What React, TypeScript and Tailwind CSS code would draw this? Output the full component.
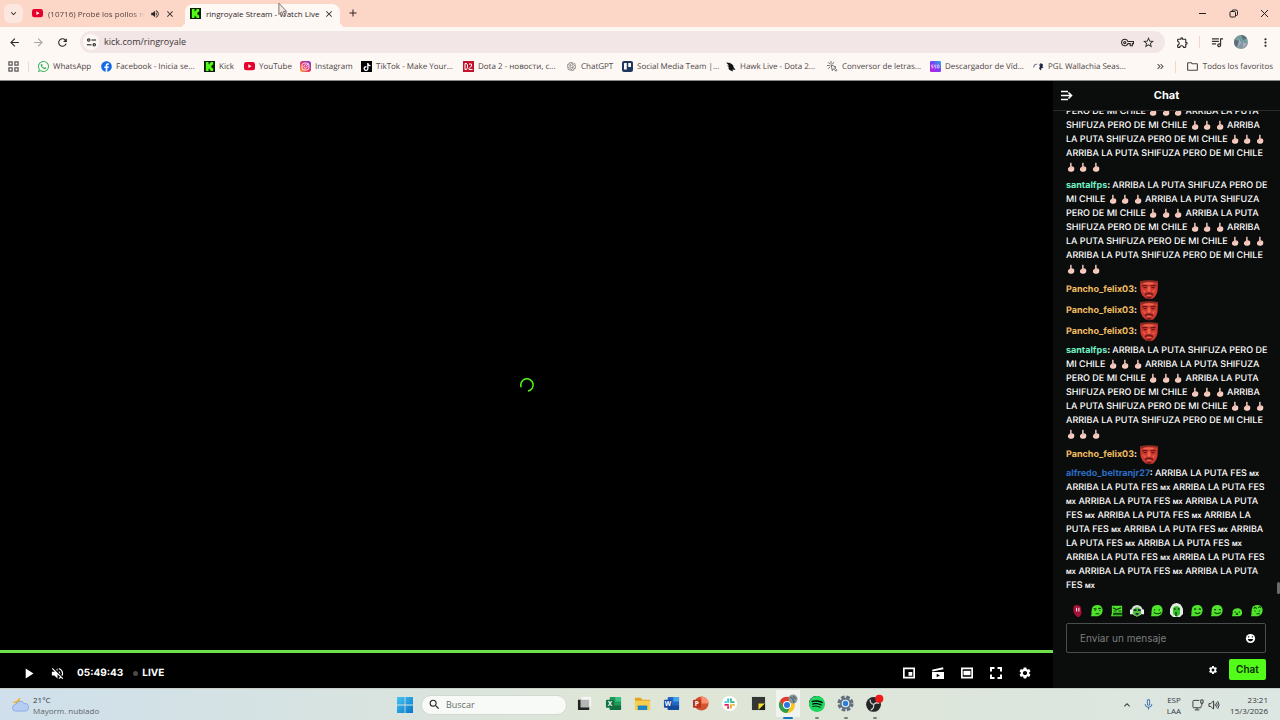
import type { ReactNode } from 'react';
import {
  MdArrowBack, MdArrowForward, MdRefresh, MdClose, MdAdd, MdKeyboardArrowDown, MdKeyboardArrowUp, MdVolumeUp,
  MdStarBorder, MdMoreVert, MdOutlineExtension, MdOutlineVpnKey, MdOutlineFolder, MdPlayArrow, MdVolumeOff,
  MdSettings, MdSearch, MdMicNone, MdKeyboardDoubleArrowRight,
} from 'react-icons/md';
import { SiWhatsapp, SiTiktok, SiOpenai, SiSpotify } from 'react-icons/si';
import { FaFacebook } from 'react-icons/fa';

/* ---------- small logos ---------- */

const KickLogo = () => (
  <svg viewBox="0 0 12 12" className="size-[11px] shrink-0">
    <rect width="12" height="12" fill="#0b1a06" />
    <path d="M2 1h3v2.500h1v-1h1V1h3v3H9v1H8v2h1v1h1v3H7V9.500H6v-1H5V11H2z" fill="#53fc18" />
  </svg>
);

const YouTubeLogo = () => (
  <svg viewBox="0 0 24 18" className="w-[11px] shrink-0">
    <rect y="0" width="24" height="18" rx="5" fill="#e8002d" />
    <path d="M9.500 5v8l7-4z" fill="#fff" />
  </svg>
);

const InstagramLogo = () => (
  <svg viewBox="0 0 24 24" className="size-[11px] shrink-0">
    <defs>
      <linearGradient id="ig" x1="0" y1="1" x2="1" y2="0">
        <stop offset="0" stopColor="#fdb52a" />
        <stop offset=".45" stopColor="#ee2a5f" />
        <stop offset="1" stopColor="#7a35dd" />
      </linearGradient>
    </defs>
    <rect width="24" height="24" rx="6" fill="url(#ig)" />
    <rect x="4.500" y="4.500" width="15" height="15" rx="4.500" fill="none" stroke="#fff" strokeWidth="2" />
    <circle cx="12" cy="12" r="3.600" fill="none" stroke="#fff" strokeWidth="2" />
    <circle cx="16.500" cy="7.500" r="1.200" fill="#fff" />
  </svg>
);

const TikTokLogo = () => (
  <span className="grid size-[11px] shrink-0 place-items-center bg-black">
    <SiTiktok className="size-[8px] text-white" />
  </span>
);

const DotaLogo = () => (
  <svg viewBox="0 0 22 22" className="size-[11px] shrink-0">
    <rect width="22" height="22" fill="#c3122b" />
    <path d="M4 5h3l2 3v5l-2 4H4zM12 6h5v4l-5 5v2h7" fill="none" stroke="#fff" strokeWidth="2" />
  </svg>
);

const TrelloLogo = () => (
  <svg viewBox="0 0 22 22" className="size-[11px] shrink-0">
    <rect width="22" height="22" rx="4" fill="#20375f" />
    <rect x="4" y="4" width="5.500" height="13" rx="1" fill="#fff" />
    <rect x="12.500" y="4" width="5.500" height="8" rx="1" fill="#fff" />
  </svg>
);

const HawkLogo = () => (
  <svg viewBox="0 0 22 22" className="size-[11px] shrink-0">
    <path d="M2 3l8 1 6 4 1 4 4 6-6-1 1 4-7-3-3-5 3 0-5-4 4 0z" fill="#111" />
  </svg>
);

const ClickLogo = () => (
  <svg viewBox="0 0 22 22" className="size-[11px] shrink-0" fill="none" stroke="#444" strokeWidth="1.500" strokeLinecap="round">
    <path d="M8 1v4M2.500 3l3 3M1 9h4M3 15l3-3M13 3l-2 3M9 8l9 4-3 1.500 5 5-2 2-5-5-2 3z" />
  </svg>
);

const DownloaderLogo = () => (
  <svg viewBox="0 0 22 22" className="size-[11px] shrink-0">
    <defs>
      <linearGradient id="ssd" x1="0" y1="1" x2="1" y2="0">
        <stop offset="0" stopColor="#c81bd8" />
        <stop offset=".5" stopColor="#7b3df5" />
        <stop offset="1" stopColor="#23b5e8" />
      </linearGradient>
    </defs>
    <rect width="22" height="22" rx="2" fill="url(#ssd)" />
    <path d="M7 8H3v3h3v3H3M13 8h-4v3h3v3h-3M15 8v6h3V8z" fill="none" stroke="#e8dcff" strokeWidth="1.400" />
  </svg>
);

const PglLogo = () => (
  <svg viewBox="0 0 22 22" className="size-[11px] shrink-0">
    <path d="M11 5l3 3 1-4 5 3-1 5 2 2h-4l-1 5-4-4 2-4z" fill="#1b2440" />
    <path d="M1 13l2-5 5-2" stroke="#7c859f" strokeWidth="2.500" fill="none" />
  </svg>
);

const bookmarks: { label: string; icon: ReactNode; width: string }[] = [
  { label: 'WhatsApp', icon: <SiWhatsapp className="size-[11px] shrink-0 text-[#37b35b]" />, width: 'w-[63px]' },
  { label: 'Facebook - Inicia se...', icon: <FaFacebook className="size-[11px] shrink-0 text-[#1269e8]" />, width: 'w-[103px]' },
  { label: 'Kick', icon: <KickLogo />, width: 'w-[40px]' },
  { label: 'YouTube', icon: <YouTubeLogo />, width: 'w-[56px]' },
  { label: 'Instagram', icon: <InstagramLogo />, width: 'w-[61px]' },
  { label: 'TikTok - Make Your...', icon: <TikTokLogo />, width: 'w-[102px]' },
  { label: 'Dota 2 - новости, с...', icon: <DotaLogo />, width: 'w-[103px]' },
  { label: 'ChatGPT', icon: <SiOpenai className="mx-px size-[9px] shrink-0 text-[#6b6b6b]" />, width: 'w-[56px]' },
  { label: 'Social Media Team |...', icon: <TrelloLogo />, width: 'w-[103px]' },
  { label: 'Hawk Live - Dota 2...', icon: <HawkLogo />, width: 'w-[102px]' },
  { label: 'Conversor de letras...', icon: <ClickLogo />, width: 'w-[103px]' },
  { label: 'Descargador de Víd...', icon: <DownloaderLogo />, width: 'w-[103px]' },
  { label: 'PGL Wallachia Seas...', icon: <PglLogo />, width: 'w-[102px]' },
];

/* ---------- browser chrome ---------- */

function TabStrip() {
  return (
    <div className="flex h-[27px] shrink-0 items-end bg-[#fcd6c7] pl-1">
      <button aria-label="Buscar pestañas" className="mb-1 grid size-[19px] place-items-center rounded-md bg-[#fde8e0]">
        <MdKeyboardArrowDown className="size-[11px]" />
      </button>
      <div className="ml-2 flex h-[27px] w-[154px] items-center gap-[5px] px-px">
        <YouTubeLogo />
        <button className="w-[97px] bg-linear-to-r from-[#4d3f3b] from-85% to-[#fcd6c7] bg-clip-text text-left text-[8px] whitespace-nowrap text-transparent">
          (10716) Probé los pollos m
        </button>
        <MdVolumeUp className="size-[10px] shrink-0" />
        <button aria-label="Cerrar pestaña" className="shrink-0"><MdClose className="size-[10px]" /></button>
      </div>
      <div className="relative flex h-[23px] w-[155px] items-center rounded-t-lg bg-[#fef8f5] pr-[6px] pb-1 pl-[5px] before:absolute before:bottom-0 before:-left-[6px] before:size-[6px] before:rounded-br-md before:shadow-[3px_3px_0_#fef8f5] before:content-[''] after:absolute after:-right-[6px] after:bottom-0 after:size-[6px] after:rounded-bl-md after:shadow-[-3px_3px_0_#fef8f5] after:content-['']">
        <KickLogo />
        <button className="ml-[5px] flex-1 text-left text-[8px] whitespace-nowrap">ringroyale Stream - Watch Live</button>
        <button aria-label="Cerrar pestaña"><MdClose className="size-[10px]" /></button>
        {/* mouse pointer */}
        <svg viewBox="0 0 10 17" className="absolute -top-[2px] left-[93px] h-[16px] w-[9px]">
          <path d="M1 1v12.500l3-3 2 5 2-1-2-4.500h3.500z" fill="#f6e9e4" stroke="#6f6662" strokeWidth="1" />
        </svg>
      </div>
      <button aria-label="Nueva pestaña" className="mb-2 ml-[7px]"><MdAdd className="size-[12px]" /></button>
      <div className="mb-2 ml-auto flex items-center gap-5 pr-[10px]">
        <button aria-label="Minimizar">
          <svg viewBox="0 0 11 11" className="size-[11px]" stroke="#222"><path d="M2 5.500h7" /></svg>
        </button>
        <button aria-label="Restaurar">
          <svg viewBox="0 0 11 11" className="size-[11px]" fill="none" stroke="#222">
            <rect x="2" y="3.500" width="5.500" height="5.500" rx="1" />
            <path d="M4 3.500V3a1 1 0 0 1 1-1h3a1.500 1.500 0 0 1 1.500 1.500v3a1 1 0 0 1-1 1h-1" />
          </svg>
        </button>
        <button aria-label="Cerrar">
          <svg viewBox="0 0 11 11" className="size-[11px]" stroke="#222"><path d="M2 2l7 7M9 2L2 9" /></svg>
        </button>
      </div>
    </div>
  );
}

function Toolbar() {
  return (
    <div className="flex h-[30px] shrink-0 items-center bg-[#fef8f5] px-2">
      <button aria-label="Atrás"><MdArrowBack className="size-[13px]" /></button>
      <button aria-label="Adelante" className="ml-[11px] text-[#aaa3a1]"><MdArrowForward className="size-[13px]" /></button>
      <button aria-label="Recargar" className="ml-[11px]"><MdRefresh className="size-[13px]" /></button>
      <div className="ml-[11px] flex h-[22px] flex-1 items-center rounded-full bg-[#f2e6e6] pr-[10px] pl-[3px]">
        <button aria-label="Información del sitio" className="grid size-4 place-items-center rounded-full bg-[#fef8f5]">
          <svg viewBox="0 0 12 12" className="size-[11px]" fill="none" stroke="#333" strokeWidth="1.300">
            <circle cx="3" cy="3.300" r="1.300" /><path d="M6 3.300h5" />
            <circle cx="9" cy="8.500" r="1.300" /><path d="M1 8.500h5" />
          </svg>
        </button>
        <input aria-label="Dirección" defaultValue="kick.com/ringroyale" className="ml-[5px] min-w-0 flex-1 bg-transparent text-[9px] text-[#3c3536] outline-none" />
        <button aria-label="Contraseñas"><MdOutlineVpnKey className="size-[13px]" /></button>
        <button aria-label="Añadir a favoritos" className="ml-2"><MdStarBorder className="size-[13px]" /></button>
      </div>
      <button aria-label="Extensiones" className="ml-[11px]"><MdOutlineExtension className="size-[13px]" /></button>
      <span className="ml-[10px] h-3 w-px bg-[#f8d3c6]" />
      <button aria-label="Multimedia" className="ml-[11px]">
        <svg viewBox="0 0 14 14" className="size-[13px]" fill="none" stroke="#333" strokeWidth="1.300">
          <path d="M1 3h7.500M1 5.700h7.500M1 8.400h4.500M10.300 10V3H13" />
          <circle cx="8.800" cy="10" r="1.500" />
        </svg>
      </button>
      <button aria-label="Perfil" className="ml-[10px]">
        <svg viewBox="0 0 14 14" className="size-[14px] rounded-full">
          <rect width="14" height="14" fill="#829a9f" />
          <path d="M0 4l5 2-3 8-3 0zM7 0l2 5 5-2-2-4z" fill="#557178" />
          <path d="M5 3l3 4-4 5 1-5zM9 7l4 2-4 4z" fill="#b5a6c3" />
          <path d="M4 1l3 2 2 6-3-3zM10 5l3 1-3 2z" fill="#5aa596" />
        </svg>
      </button>
      <button aria-label="Menú" className="ml-[11px]"><MdMoreVert className="size-[13px]" /></button>
    </div>
  );
}

function BookmarksBar() {
  return (
    <nav className="flex h-6 shrink-0 items-center border-b border-[#8e8a8a] bg-[#fef8f5] pb-1 pl-2 text-[8px] text-[#4b4444]">
      <button aria-label="Aplicaciones">
        <svg viewBox="0 0 12 12" className="size-[11px]" fill="none" stroke="#444" strokeWidth="1.200">
          <rect x="1" y="1" width="3.500" height="3.500" /><rect x="7.500" y="1" width="3.500" height="3.500" />
          <rect x="1" y="7.500" width="3.500" height="3.500" /><rect x="7.500" y="7.500" width="3.500" height="3.500" />
        </svg>
      </button>
      <span className="mr-[9px] ml-[9px] h-[10px] w-px bg-[#e6dad6]" />
      {bookmarks.map((b) => (
        <a key={b.label} href="#" className={`flex shrink-0 items-center gap-[4px] whitespace-nowrap ${b.width}`}>
          {b.icon}
          {b.label}
        </a>
      ))}
      <button aria-label="Más favoritos" className="mr-[9px] ml-auto"><MdKeyboardDoubleArrowRight className="size-[11px]" /></button>
      <span className="mr-[10px] h-3 w-px bg-[#f8d3c6]" />
      <a href="#" className="mr-[7px] flex items-center gap-[4px] whitespace-nowrap">
        <MdOutlineFolder className="size-[13px]" />
        Todos los favoritos
      </a>
    </nav>
  );
}

/* ---------- player ---------- */

function Player() {
  return (
    <main className="relative flex min-w-0 flex-1 flex-col justify-end bg-black text-white">
      <div className="absolute inset-0 grid place-items-center">
        <svg viewBox="0 0 16 16" className="size-[16px]">
          <path d="M2.200 10.300A6.200 6.200 0 1 1 9 14.100" fill="none" stroke="#53fc18" strokeWidth="1.500" />
        </svg>
      </div>
      <div className="h-[3px] bg-[#6fe04a]" />
      <div className="relative flex h-[35px] items-center pt-[5px] pr-[21px] pl-5">
        <button aria-label="Reproducir"><MdPlayArrow className="size-[17px]" /></button>
        <button aria-label="Activar sonido" className="ml-[13px]"><MdVolumeOff className="size-[15px]" /></button>
        <span className="ml-3 text-[10px] font-bold">05:49:43</span>
        <span className="ml-[10px] size-[5px] rounded-full bg-[#4a4a4a]" />
        <span className="ml-1 text-[10px] font-bold">LIVE</span>
        <div className="ml-auto flex items-center gap-[15px]">
          <button aria-label="Ventana flotante">
            <svg viewBox="0 0 14 14" className="size-[14px]" fill="#fff">
              <path d="M1 1.500h12v11H1zm1.700 1.700v7.600h8.600V3.200z" fillRule="evenodd" />
              <rect x="6.500" y="6" width="3.800" height="3.800" />
            </svg>
          </button>
          <button aria-label="Crear clip">
            <svg viewBox="0 0 14 14" className="size-[14px]" fill="#fff">
              <path d="M1 3.800l11-2.600.5 2L1.500 5.600z" />
              <path d="M1 6h12v7H1zm4.700 1.700v3.600l3.200-1.800z" fillRule="evenodd" />
            </svg>
          </button>
          <button aria-label="Modo cine">
            <svg viewBox="0 0 14 14" className="size-[14px]" fill="#fff">
              <path d="M1 1.500h12v11H1zm1.700 1.700v7.600h8.600V3.200z" fillRule="evenodd" />
              <rect x="3.500" y="4.800" width="7" height="4.400" />
            </svg>
          </button>
          <button aria-label="Pantalla completa">
            <svg viewBox="0 0 14 14" className="size-[14px]" fill="none" stroke="#fff" strokeWidth="2">
              <path d="M2 5.500V2h3.500M8.500 2H12v3.500M12 8.500V12H8.500M5.500 12H2V8.500" />
            </svg>
          </button>
          <button aria-label="Ajustes"><MdSettings className="size-[14px]" /></button>
        </div>
      </div>
    </main>
  );
}

/* ---------- chat ---------- */

const Finger = () => (
  <svg viewBox="0 0 12 12" className="inline-block size-[10px] align-[-2px]">
    <path d="M5 1.500c0-.8 1.700-.8 1.700 0v3.700l1.200.1c1.300.1 2 .7 2 1.900v1.500c0 1.900-1.200 3-3.200 3H5.400C3.500 11.700 2.300 10.400 2.300 8.800c0-1 .3-1.700 1-2.300L5 5.300z" fill="#f8cfc2" />
    <path d="M5 5.500v2M6.700 5.500v2M8.300 5.800v1.700M3.300 8.400h3" stroke="#d99f93" strokeWidth=".5" fill="none" />
  </svg>
);

const RedFace = () => (
  <svg viewBox="0 0 20 20" className="inline-block size-[20px]">
    <path d="M1 1q9-1 18 0l-.5 10q-1 5-4.500 7.500-3.500 1.500-7 0Q2.500 15.500 1.500 11z" fill="#cf3a30" />
    <path d="M1 1q9-1 18 0l-.3 2Q10 .8 1.200 4z" fill="#8a2a24" />
    <path d="M4 3q6-1.500 11 0l-1 1.500H5z" fill="#ef6449" />
    <path d="M3 6q3-1.200 5.500 0M11.500 6q3-1.200 5.500 0" stroke="#6d161a" strokeWidth="1.300" fill="none" />
    <path d="M4.500 7.600h3M12.500 7.600h3" stroke="#48090e" strokeWidth=".9" />
    <path d="M9 6.500l-1 4.500 2 1 2-1-1-4.500z" fill="#ee624a" />
    <path d="M3 9.500l4 1.500-1.500 2zM17 9.500l-4 1.500 1.500 2z" fill="#ea5a43" />
    <path d="M6 13.700q4-2.200 8 0l.3 2.300-1.500-1.300q-2.800-1-5.600 0L5.700 16z" fill="#6a1a1c" />
    <path d="M8 15.300h4" stroke="#f07a62" strokeWidth=".8" />
    <path d="M7 16.800h6l-1.500 2.200H8.500z" fill="#7a1f20" />
  </svg>
);

const shifuzaTail = [
  'PERO DE MI CHILE 🖕 🖕 🖕 ARRIBA LA PUTA',
  'SHIFUZA PERO DE MI CHILE 🖕 🖕 🖕 ARRIBA',
  'LA PUTA SHIFUZA PERO DE MI CHILE 🖕 🖕 🖕',
  'ARRIBA LA PUTA SHIFUZA PERO DE MI CHILE',
  '🖕 🖕 🖕',
];

const shifuza = [
  'ARRIBA LA PUTA SHIFUZA PERO DE',
  'MI CHILE 🖕 🖕 🖕 ARRIBA LA PUTA SHIFUZA',
  ...shifuzaTail,
];

const fes = [
  'ARRIBA LA PUTA FES 🇲🇽',
  'ARRIBA LA PUTA FES 🇲🇽 ARRIBA LA PUTA FES',
  '🇲🇽 ARRIBA LA PUTA FES 🇲🇽 ARRIBA LA PUTA',
  'FES 🇲🇽 ARRIBA LA PUTA FES 🇲🇽 ARRIBA LA',
  'PUTA FES 🇲🇽 ARRIBA LA PUTA FES 🇲🇽 ARRIBA',
  'LA PUTA FES 🇲🇽 ARRIBA LA PUTA FES 🇲🇽',
  'ARRIBA LA PUTA FES 🇲🇽 ARRIBA LA PUTA FES',
  '🇲🇽 ARRIBA LA PUTA FES 🇲🇽 ARRIBA LA PUTA',
  'FES 🇲🇽',
];

// swaps the emoji for what the chat shows: a drawn hand, and plain letters for the flag
function ChatText({ text }: { text: string }) {
  return text.split(/(🖕|🇲🇽)/u).map((part, i) => {
    if (part === '🖕') return <Finger key={i} />;
    if (part === '🇲🇽') return <span key={i} className="text-[6px] leading-none font-bold">MX</span>;
    return part;
  });
}

function Message({ name, color, lines }: { name?: string; color?: string; lines: string[] }) {
  return (
    <p className="shrink-0 py-[2px] whitespace-nowrap">
      {lines.map((line, i) => (
        <span key={i} className="block h-[14px]">
          {i === 0 && name && <b className="font-bold"><span className={color}>{name}</span>: </b>}
          <ChatText text={line} />
        </span>
      ))}
    </p>
  );
}

const PanchoMessage = () => (
  <p className="flex h-[21px] shrink-0 items-center font-bold">
    <span className="text-[#f2bd62]">Pancho_felix03</span>:
    <span className="ml-[2px] flex"><RedFace /></span>
  </p>
);

// blob-shaped emotes, only the face differs
function Blob({ face, shape = 'M2 5q1-4 6-4 5 0 5.500 5 .3 6-5 7H1q1-2 .5-4z' }: { face: string; shape?: string }) {
  return (
    <svg viewBox="0 0 15 15" className="size-[14px]">
      <path d={shape} fill="#4fe32c" />
      <path d={face} fill="none" stroke="#0d3a08" strokeWidth="1.200" />
    </svg>
  );
}

const emotes: ReactNode[] = [
  <svg viewBox="0 0 15 15" className="size-[14px]">
    <path d="M4 2q5-2 7.500 1l1 6q-1 5-4.500 5-4.500-3-4.500-8z" fill="#a30f35" />
    <path d="M7 4v4M9.500 4v4" stroke="#ffd5df" strokeWidth="1.200" />
  </svg>,
  <Blob face="M4 5l3 .5M9 5l3-.5M5 7h1M10 7h1M6 10.500h4" />,
  <Blob shape="M2 2h11v11H1l1-3z" face="M3 4l4 2 5-2M4 7.500h3M9 7.500h3M4 10h8v1.500H4z" />,
  <svg viewBox="0 0 15 15" className="size-[14px]">
    <circle cx="7.500" cy="7" r="6" fill="#d9ded9" />
    <path d="M3.500 6q4-5 8 0l1 4-5 4-5-4z" fill="#4fc23c" />
    <path d="M0 6h3v5H0zM12 6h3v5h-3z" fill="#eee" />
    <path d="M4 6.500h3M8.500 6.500h3M6 10.500h3" stroke="#1b2533" strokeWidth="1.800" />
  </svg>,
  <Blob face="M5 5.500v1.500M10 5.500v1.500M4 9q4 3 8 0" />,
  <svg viewBox="0 0 15 15" className="size-[15px]">
    <path d="M1 6q2-6 6.500-6T14 6v5l-3 3H4l-3-3z" fill="#e4ebe4" />
    <path d="M4 5q3.500-4 7 0v6l-3 3-4-3z" fill="#34c42b" />
    <path d="M5 6h1.500M9 6h1.500M7 9v4" stroke="#0d3a08" strokeWidth="1.300" />
  </svg>,
  <Blob face="M4.500 6q1-1.500 2 0M9.500 6q1-1.500 2 0M5 9q3 2.500 6 0" />,
  <Blob face="M4.500 6h2M9.500 6h2M4.500 9q3.500 2.500 7 0" />,
  <Blob shape="M3 7q2-3 6-2.500 4 1 4 4.500 0 4-4 4H2q1-2 1-6z" face="M5.500 8v1.500M10 8v1.500M6.500 11.500l1-1.500 1 1.500" />,
  <Blob face="M4 5q1.500-3 3 0M9 4q1.500-2 2.500 0M5.500 7v1M10 7v1M7 10.500h3.500" />,
];

function Chat() {
  return (
    <aside className="flex w-[227px] shrink-0 flex-col bg-[#0b0c0c] text-white">
      <header className="flex h-[30px] shrink-0 items-center border-b border-[#2a2c2c] px-[7px]">
        <button aria-label="Ocultar chat">
          <svg viewBox="0 0 13 13" className="size-[13px]" fill="none" stroke="#fff" strokeWidth="1.600">
            <path d="M1 2.500h7M1 6.500h10M1 10.500h7M8.500 3.500l3 3-3 3" />
          </svg>
        </button>
        <h2 className="flex-1 pr-[13px] text-center text-[11px] font-bold">Chat</h2>
      </header>
      <div className="flex min-h-0 flex-1 overflow-hidden">
        <div className="flex min-w-0 flex-1 flex-col justify-end overflow-hidden pb-[3px] pl-[13px] text-[9px] leading-[14px] font-medium">
          <Message lines={shifuzaTail} />
          <Message name="santalfps" color="text-[#72f0c4]" lines={shifuza} />
          <PanchoMessage />
          <PanchoMessage />
          <PanchoMessage />
          <Message name="santalfps" color="text-[#72f0c4]" lines={shifuza} />
          <PanchoMessage />
          <Message name="alfredo_beltranjr27" color="text-[#2b6cc4]" lines={fes} />
        </div>
        <span className="mb-1 h-3 w-[3px] self-end rounded-full bg-[#6b6d6d]" />
      </div>
      <div className="shrink-0 pr-[14px] pb-2 pl-[13px]">
        <div className="flex h-[25px] items-center justify-between pr-[2px] pl-1">
          {emotes.map((emote, i) => (
            <button key={i} aria-label={`Emote ${i + 1}`}>{emote}</button>
          ))}
        </div>
        <div className="flex h-[30px] items-center rounded-xs border border-[#4b4e4e] pr-[9px] pl-[13px]">
          <input aria-label="Enviar un mensaje" placeholder="Enviar un mensaje" className="min-w-0 flex-1 bg-transparent text-[10px] outline-none placeholder:text-[#7c7f7f]" />
          <button aria-label="Emojis">
            <svg viewBox="0 0 12 12" className="size-[11px]">
              <circle cx="6" cy="6" r="5" fill="#fff" />
              <path d="M4 3.500v1.500M8 3.500v1.500" stroke="#0b0c0c" strokeWidth="1.200" />
              <path d="M3 6.500h6q-.5 2.700-3 2.700T3 6.500z" fill="#0b0c0c" />
            </svg>
          </button>
        </div>
        <div className="mt-[6px] flex items-center justify-end gap-[11px]">
          <button aria-label="Ajustes del chat"><MdSettings className="size-[10px]" /></button>
          <button className="h-[21px] w-[37px] rounded-xs bg-[#53fc18] text-[10px] font-semibold text-[#0c2a05]">Chat</button>
        </div>
      </div>
    </aside>
  );
}

/* ---------- taskbar ---------- */

function OfficeIcon({ letter, dark, mid, light }: { letter: string; dark: string; mid: string; light: string }) {
  return (
    <svg viewBox="0 0 18 18" className="size-[17px]">
      <rect x="5" y="2" width="12" height="14" rx="1" fill={mid} />
      <path d="M11 2h5q1 0 1 1v4h-6z" fill={light} />
      <path d="M5 11h12v4q0 1-1 1H6q-1 0-1-1z" fill={dark} />
      <rect x="1" y="5" width="8.500" height="8.500" rx="1" fill={dark} />
      <text x="5.200" y="11.800" fontSize="7" fontWeight="700" textAnchor="middle" fill="#fff">{letter}</text>
    </svg>
  );
}

const taskApps: { name: string; open?: boolean; active?: boolean; icon: ReactNode }[] = [
  {
    name: 'Vista de tareas',
    icon: (
      <svg viewBox="0 0 16 16" className="size-[15px]">
        <rect x="5" y="1" width="10" height="10" fill="#f7f7f5" /><path d="M1 4h3v8h9v3H1z" fill="#222" /><rect x="4" y="4" width="9" height="8" fill="#b5b7b5" />
      </svg>
    ),
  },
  { name: 'Excel', icon: <OfficeIcon letter="X" dark="#107040" mid="#1f9a5b" light="#37c481" /> },
  {
    name: 'Explorador',
    icon: (
      <svg viewBox="0 0 18 18" className="size-[17px]">
        <path d="M1 3h6l2 2h8v11H1z" fill="#e2a320" /><path d="M1 6h16v10H1z" fill="#f9cd4e" /><path d="M4 12q0-1 1-1h8q1 0 1 1v4H4z" fill="#1b87c9" />
      </svg>
    ),
  },
  { name: 'Word', icon: <OfficeIcon letter="W" dark="#154a9e" mid="#2267c4" light="#41a5ee" /> },
  {
    name: 'PowerPoint',
    icon: (
      <svg viewBox="0 0 18 18" className="size-[17px]">
        <circle cx="10" cy="9" r="7.500" fill="#d35230" /><path d="M10 1.500A7.500 7.500 0 0 1 17.500 9H10z" fill="#ff9070" />
        <rect x="1" y="5" width="8.500" height="8.500" rx="1" fill="#b7351c" />
        <text x="5.200" y="11.800" fontSize="7" fontWeight="700" textAnchor="middle" fill="#fff">P</text>
      </svg>
    ),
  },
  {
    name: 'Slack',
    icon: (
      <svg viewBox="0 0 18 18" className="size-[17px]" strokeWidth="2" strokeLinecap="round">
        <circle cx="9" cy="9" r="8" fill="#fff" />
        <path d="M7.500 4.500v3M4.500 7.500h1" stroke="#36c5f0" /><path d="M10.500 7.500h3M10.500 4.500v1" stroke="#2eb67d" />
        <path d="M10.500 10.500v3M12.700 10.500h1" stroke="#ecb22e" /><path d="M4.500 10.500h3M7.500 12.700v1" stroke="#e01e5a" />
      </svg>
    ),
  },
  {
    name: 'Notas rápidas',
    icon: (
      <svg viewBox="0 0 16 16" className="size-[15px]">
        <path d="M1 1h14v14H1z" fill="#333634" /><path d="M8 8h7l-7 7z" fill="#f7df28" /><path d="M15 8v7H8z" fill="#1d1f1e" />
      </svg>
    ),
  },
  {
    name: 'Chrome', open: true, active: true,
    icon: (
      <svg viewBox="0 0 20 20" className="size-[20px]">
        <circle cx="9" cy="11" r="8" fill="#f9c61f" />
        <path d="M2 7A8 8 0 0 1 16 7H9l-3.500 6z" fill="#e33b2e" />
        <path d="M2 7a8 8 0 0 0 7 12l3.500-6H5.500z" fill="#2b9f4b" />
        <circle cx="9" cy="11" r="4" fill="#fff" /><circle cx="9" cy="11" r="3" fill="#2d74e6" />
        <circle cx="15" cy="5" r="4.500" fill="#87999d" /><path d="M12 3l3 2 1 4M15 2l3 3" stroke="#50686e" strokeWidth="1.300" fill="none" />
      </svg>
    ),
  },
  { name: 'Spotify', open: true, icon: <span className="grid size-[15px] place-items-center rounded-full bg-black"><SiSpotify className="size-[16px] text-[#1ed760]" /></span> },
  {
    name: 'Configuración', open: true,
    icon: (
      <svg viewBox="0 0 18 18" className="size-[17px]">
        <circle cx="9" cy="9" r="6.800" fill="none" stroke="#5f6f7d" strokeWidth="3.400" strokeDasharray="3.600 1.740" />
        <circle cx="9" cy="9" r="6" fill="#667684" /><circle cx="9" cy="9" r="4" fill="#e7eff5" /><circle cx="9" cy="9" r="2.800" fill="#2b7ed0" />
      </svg>
    ),
  },
  {
    name: 'OBS', open: true,
    icon: (
      <svg viewBox="0 0 20 20" className="size-[19px]">
        <circle cx="9" cy="11" r="7.800" fill="#232527" />
        <path d="M9 11q-4-1-3.500-5M9 11q3-3 6-1M9 11q1 4-3 6" fill="none" stroke="#c9cccd" strokeWidth="1.300" />
        <circle cx="15" cy="5" r="4.300" fill="#f01818" />
      </svg>
    ),
  },
];

function Taskbar() {
  return (
    <footer className="grid h-8 shrink-0 grid-cols-[1fr_auto_1fr] items-center border-t border-[#c9cdc8] bg-linear-to-r from-[#cfe0ec] via-[#dfe6d6] to-[#dce6e2] text-[8px] text-[#35393c]">
      <button className="flex items-center gap-1 pl-3 text-left leading-[11px]">
        <svg viewBox="0 0 18 18" className="size-[17px]">
          <path d="M8 1q2 5-3 7-3 0-4-2 5 0 7-5z" fill="#f3b430" />
          <path d="M4 16a3.500 3.500 0 0 1 0-7 5 5 0 0 1 9-1 4 4 0 0 1 1 8z" fill="#b6cdf3" stroke="#7f9fda" strokeWidth=".8" />
        </svg>
        <span><span className="block">21°C</span><span className="block text-[#5c6468]">Mayorm. nublado</span></span>
      </button>
      <div className="flex items-center pl-[6px]">
        <button aria-label="Inicio">
          <svg viewBox="0 0 16 16" className="size-[16px]">
            <defs>
              <linearGradient id="win" x1="0" y1="0" x2="1" y2="1"><stop offset="0" stopColor="#45c5f2" /><stop offset="1" stopColor="#0874c9" /></linearGradient>
            </defs>
            <path d="M0 0h7.600v7.600H0zM8.400 0H16v7.600H8.400zM0 8.400h7.600V16H0zM8.400 8.400H16V16H8.400z" fill="url(#win)" />
          </svg>
        </button>
        <label className="mr-[3px] ml-2 flex h-5 w-[146px] items-center gap-[5px] rounded-full border border-[#d3d8d0] bg-[#f8faf7] px-[6px]">
          <MdSearch className="size-[13px] text-[#222]" />
          <input aria-label="Buscar" placeholder="Buscar" className="min-w-0 flex-1 bg-transparent text-[9px] outline-none placeholder:text-[#666b6b]" />
        </label>
        {taskApps.map((app) => (
          <button key={app.name} aria-label={app.name} className="flex h-[29px] w-[29px] flex-col items-center">
            <span className={`grid h-[27px] w-[24px] place-items-center ${app.active ? 'bg-[#f0f3ee]' : ''}`}>{app.icon}</span>
            {app.open && <span className={app.active ? 'h-[2px] w-[10px] rounded-full bg-[#1675c4]' : 'h-[2px] w-1 rounded-full bg-[#7d827e]'} />}
          </button>
        ))}
      </div>
      <div className="flex items-center justify-end pr-3 text-center leading-[11px]">
        <button aria-label="Iconos ocultos"><MdKeyboardArrowUp className="size-[12px]" /></button>
        <button aria-label="Micrófono" className="ml-[9px]"><MdMicNone className="size-[13px] text-[#3f76b0]" /></button>
        <button className="ml-3"><span className="block">ESP</span><span className="block">LAA</span></button>
        <button aria-label="Red" className="ml-[11px]">
          <svg viewBox="0 0 13 13" className="size-[12px]" fill="none" stroke="#333">
            <path d="M8 1.500H2q-1 0-1 1v6q0 1 1 1h7q1 0 1-1V7M5.500 9.500v2M3 11.800h5M9.500 1h2.500v3.500H9.500zM10.700 4.500V7" />
          </svg>
        </button>
        <button aria-label="Volumen" className="ml-1">
          <svg viewBox="0 0 13 13" className="size-[12px]" fill="none" stroke="#333">
            <path d="M1 5h2l3-3v9L3 8H1zM7.500 5q1 1.500 0 3M9 3.700q2 2.800 0 5.600M10.500 2.300q3 4.200 0 8.400" />
          </svg>
        </button>
        <button className="ml-[10px] text-right"><span className="block">23:21</span><span className="block">15/3/2026</span></button>
      </div>
    </footer>
  );
}

export default function App() {
  return (
    <div className="flex h-screen flex-col overflow-hidden bg-black font-['Open_Sans','Noto_Sans',sans-serif] text-[#2b2525] [text-rendering:geometricPrecision]">
      <TabStrip />
      <Toolbar />
      <BookmarksBar />
      <div className="flex min-h-0 flex-1 font-[Inter,sans-serif] [font-variation-settings:'opsz'_28]">
        <Player />
        <Chat />
      </div>
      <Taskbar />
    </div>
  );
}
